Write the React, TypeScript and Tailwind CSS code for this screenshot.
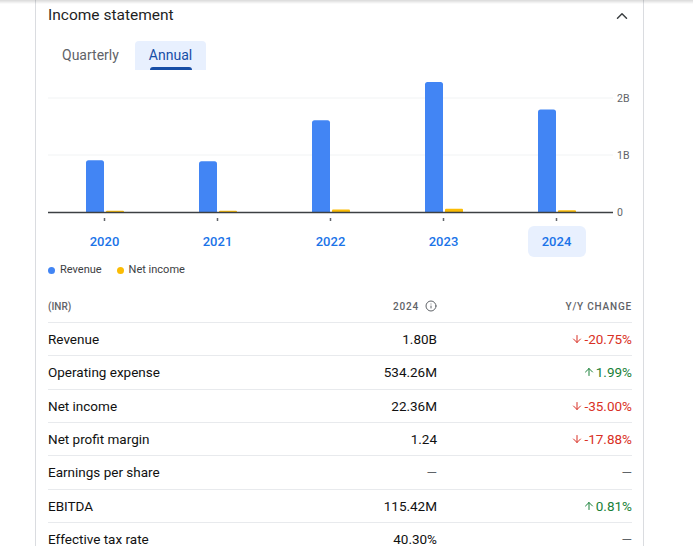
import { ChevronUp, ArrowDown, ArrowUp, Info } from 'lucide-react';

const years = [
  { year: '2020', revenue: 0.91, net: 0.02 },
  { year: '2021', revenue: 0.89, net: 0.02 },
  { year: '2022', revenue: 1.61, net: 0.045 },
  { year: '2023', revenue: 2.28, net: 0.055 },
  { year: '2024', revenue: 1.8, net: 0.03 },
];

const rows: { label: string; value: string; change: string; dir?: 'up' | 'down' }[] = [
  { label: 'Revenue', value: '1.80B', change: '-20.75%', dir: 'down' },
  { label: 'Operating expense', value: '534.26M', change: '1.99%', dir: 'up' },
  { label: 'Net income', value: '22.36M', change: '-35.00%', dir: 'down' },
  { label: 'Net profit margin', value: '1.24', change: '-17.88%', dir: 'down' },
  { label: 'Earnings per share', value: '—', change: '—' },
  { label: 'EBITDA', value: '115.42M', change: '0.81%', dir: 'up' },
  { label: 'Effective tax rate', value: '40.30%', change: '—' },
];

// chart geometry (svg coords, origin = left edge of plot)
const PER_B = 57;
const BASE = 142;
const STEP = 113;

function topRounded(x: number, h: number, w: number, r: number) {
  const y = BASE - h;
  const rr = Math.min(r, h);
  return `M${x} ${BASE} V${y + rr} Q${x} ${y} ${x + rr} ${y} H${x + w - rr} Q${x + w} ${y} ${x + w} ${y + rr} V${BASE} Z`;
}

function Chart() {
  return (
    <svg width={584} height={152} className="block overflow-visible" style={{ fontFamily: 'Roboto, sans-serif' }}>
      <line x1={0} x2={565} y1={28} y2={28} stroke="#f1f3f4" strokeWidth={1} />
      <line x1={0} x2={565} y1={85} y2={85} stroke="#f1f3f4" strokeWidth={1} />
      <text x={569} y={32} fontSize={10.5} fill="#5f6368">2B</text>
      <text x={569} y={89} fontSize={10.5} fill="#5f6368">1B</text>
      <text x={569} y={146} fontSize={10.5} fill="#5f6368">0</text>
      {years.map((y, i) => {
        const c = STEP / 2 + i * STEP;
        const rh = y.revenue * PER_B;
        const nh = Math.max(1.2, y.net * PER_B);
        return (
          <g key={y.year}>
            <path d={topRounded(c - 18.5, rh, 18, 2.5)} fill="#4285f4" />
            <path d={topRounded(c + 1.5, nh, 18, 1)} fill="#fbbc04" />
            <rect x={c - 0.75} y={148} width={1.5} height={3} fill="#5f6368" />
          </g>
        );
      })}
      <line x1={0} x2={565} y1={BASE + 0.5} y2={BASE + 0.5} stroke="#3c4043" strokeWidth={1.5} />
    </svg>
  );
}

export default function App() {
  return (
    <div className="relative min-h-[546px] bg-white text-[#202124]" style={{ fontFamily: 'Roboto, "Liberation Sans", sans-serif' }}>
      <div className="pointer-events-none absolute inset-x-0 top-0 h-[4px] bg-gradient-to-b from-[#00000026] to-transparent" />

      <div className="ml-[35px] w-[609px] min-h-[546px] border-x border-[#dadce0] pl-[12px] pr-[10px]">
        {/* header */}
        <div className="flex h-[31px] items-center justify-between pt-[1px]">
          <h2 className="text-[15.5px] font-normal text-[#1f1f1f]">Income statement</h2>
          <ChevronUp size={18} strokeWidth={2} className="mr-[2px] text-[#3c4043]" />
        </div>

        {/* tabs */}
        <div className="mt-[10px] flex gap-[2px]">
          <button className="h-[29px] px-[14px] text-[14px] text-[#5f6368]">Quarterly</button>
          <button className="relative h-[29px] rounded-t-sm bg-[#e8f0fe] px-[14px] text-[14px] text-[#174ea6]">
            Annual
            <span className="absolute bottom-0 left-[15px] right-[14px] h-[3px] rounded-t-sm bg-[#174ea6]" />
          </button>
        </div>

        <Chart />

        {/* x labels */}
        <div className="mt-[4px] grid w-[565px] grid-cols-5">
          {years.map((y) => (
            <div key={y.year} className="flex justify-center">
              <span
                className={
                  y.year === '2024'
                    ? 'flex h-[31px] w-[58px] items-center justify-center rounded-md bg-[#e8f0fe] text-[13px] font-medium text-[#1a73e8]'
                    : 'flex h-[31px] w-[58px] items-center justify-center text-[13px] font-medium text-[#1a73e8]'
                }
              >
                {y.year}
              </span>
            </div>
          ))}
        </div>

        {/* legend */}
        <div className="mt-[5px] flex h-[16px] items-center text-[11px] text-[#3c4043]">
          <span className="h-[7px] w-[7px] rounded-full bg-[#4285f4]" />
          <span className="ml-[5px]">Revenue</span>
          <span className="ml-[15px] h-[7px] w-[7px] rounded-full bg-[#fbbc04]" />
          <span className="ml-[5px]">Net income</span>
        </div>

        {/* table */}
        <div className="mt-[12px] w-[584px]">
          <div className="grid h-[33px] grid-cols-[1fr_150px_195px] items-center border-b border-[#e8eaed] text-[10px] font-medium text-[#5f6368]">
            <span>(INR)</span>
            <span className="flex items-center justify-end gap-[6px] tracking-[0.08em]">
              2024
              <Info size={12} strokeWidth={2} className="text-[#5f6368]" />
            </span>
            <span className="text-right tracking-[0.08em]">Y/Y CHANGE</span>
          </div>
          {rows.map((r) => (
            <div
              key={r.label}
              className="grid h-[33.33px] grid-cols-[1fr_150px_195px] items-center border-b border-[#e8eaed] text-[13.5px]"
            >
              <span className="text-[#111]">{r.label}</span>
              <span className={r.value === '—' ? 'text-right text-[#5f6368]' : 'text-right text-[#111]'}>{r.value}</span>
              <span
                className={
                  r.dir === 'down'
                    ? 'flex items-center justify-end gap-[1px] text-[#d93025]'
                    : r.dir === 'up'
                    ? 'flex items-center justify-end gap-[1px] text-[#188038]'
                    : 'flex items-center justify-end text-[#5f6368]'
                }
              >
                {r.dir === 'down' && <ArrowDown size={12} strokeWidth={2} />}
                {r.dir === 'up' && <ArrowUp size={12} strokeWidth={2} />}
                {r.change}
              </span>
            </div>
          ))}
        </div>
      </div>
    </div>
  );
}
